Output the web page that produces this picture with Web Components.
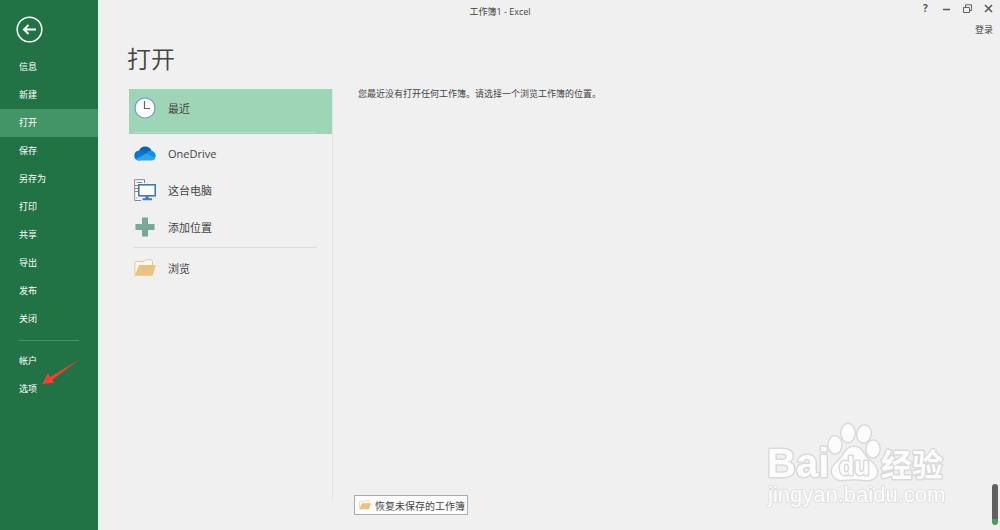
<!DOCTYPE html>
<html lang="zh-CN">
<head>
<meta charset="utf-8">
<title>工作簿1 - Excel</title>
<style>
html, body {
    height: 100%;
    margin: 0;
}
body {
    font-family: "Open Sans", "Noto Sans CJK SC", sans-serif;
    font-size: 9px;
    color: #444;
    background: #f0f0f0;
}
</style>
</head>
<body>
<backstage-view>
    <side-nav slot="nav">
        <nav-item>信息</nav-item>
        <nav-item>新建</nav-item>
        <nav-item selected>打开</nav-item>
        <nav-item>保存</nav-item>
        <nav-item>另存为</nav-item>
        <nav-item>打印</nav-item>
        <nav-item>共享</nav-item>
        <nav-item>导出</nav-item>
        <nav-item>发布</nav-item>
        <nav-item>关闭</nav-item>
        <nav-item slot="bottom">帐户</nav-item>
        <nav-item slot="bottom" pointed>选项</nav-item>
    </side-nav>
    <title-bar slot="title">工作簿1 - Excel</title-bar>
    <span slot="heading">打开</span>
    <place-list slot="places">
        <place-item icon="clock" selected>最近</place-item>
        <place-item icon="cloud">OneDrive</place-item>
        <place-item icon="computer">这台电脑</place-item>
        <place-item icon="plus" divided>添加位置</place-item>
        <place-item icon="folder">浏览</place-item>
    </place-list>
    <recent-pane slot="content">您最近没有打开任何工作簿。请选择一个浏览工作簿的位置。</recent-pane>
</backstage-view>
<baidu-mark></baidu-mark>
<scroll-thumb></scroll-thumb>

<script>
const folderIcon = `
<svg viewBox="0 0 22 18">
    <path d="M1 16.500V3.500Q1 2.500 2 2.500H10L12 .8H17.500L18.500 2.500V6" fill="#fffaf0" stroke="#e8c88e"/>
    <path d="M5 6H21.800L18.500 16.800H.8Z" fill="#eac282"/>
</svg>`;

const icons = {
    clock: `
<svg viewBox="0 0 22 22">
    <circle cx="11" cy="11" r="10" fill="#fff" stroke="#6f9fc9" stroke-width="1.200"/>
    <path d="M10.500 4V11.500H16" fill="none" stroke="#666" stroke-width="1.200"/>
</svg>`,
    cloud: `
<svg viewBox="0 0 22 22">
    <path d="M5 9Q6.500 4.500 11 4.500Q15.500 4.500 17.500 8.500L14 13Z" fill="#0364b8"/>
    <path d="M5 18.500Q.3 18 .3 13.500Q.5 9 5 8.500Q7.500 8 9.500 9.500L15 13L7 18Z" fill="#0078d4"/>
    <path d="M12 11.500Q14 8.300 17 8.500Q21.500 9.500 21.800 14L20.500 16.500L16 14Z" fill="#1490df"/>
    <path d="M1.500 17L12.500 11.500L21.500 16Q20.500 18.600 17.500 18.600H5Q2.800 18.600 1.500 17Z" fill="#28a8ea"/>
</svg>`,
    computer: `
<svg viewBox="0 0 22 22">
    <path d="M4 21.500H.7V.7H10.500V4" fill="#fff" stroke="#888"/>
    <path d="M2.500 3.500H8.500M1 6.500H5M1 9.500H4M1 12.500H4" stroke="#888"/>
    <path d="M2 19H3.500M4 21.500H7" stroke="#888"/>
    <rect x="4.800" y="5.800" width="16.400" height="11" fill="#fff" stroke="#3f7abf" stroke-width="1.600"/>
    <path d="M11.500 17H14.500V19.300H18V21.300H8.500V19.300H11.500Z" fill="#3f7abf"/>
</svg>`,
    plus: `
<svg viewBox="0 0 22 22">
    <path d="M8 1.500H14V8H20.500V14H14V20.500H8V14H1.500V8H8Z" fill="#78a996"/>
</svg>`,
    folder: folderIcon
};

function define(name, html, setup) {
    const tmpl = document.createElement('template');
    tmpl.innerHTML = html;
    customElements.define(name, class extends HTMLElement {
        constructor() {
            super();
            this.attachShadow({mode: 'open'}).appendChild(tmpl.content.cloneNode(true));
        }
        connectedCallback() {
            if (setup) setup(this, this.shadowRoot);
        }
    });
}

// page frame: green menu on the left, title and two panes on the right
define('backstage-view', `
<style>
:host {
    display: flex;
    min-height: 100vh;
}
main {
    flex: 1;
    display: flex;
    flex-direction: column;
}
.account {
    display: flex;
    justify-content: flex-end;
    padding-right: 7px;
    line-height: 16px;
}
a {
    color: #444;
    text-decoration: none;
}
h1 {
    margin: 0 0 9px 29px;
    font-size: 24px;
    font-weight: 350;
    line-height: 42px;
}
.panes {
    flex: 1;
    display: flex;
    padding: 0 31px 15px;
}
::slotted(recent-pane) {
    flex: 1;
}
</style>
<slot name="nav"></slot>
<main>
    <slot name="title"></slot>
    <div class="account"><a href="#">登录</a></div>
    <h1><slot name="heading"></slot></h1>
    <div class="panes">
        <slot name="places"></slot>
        <slot name="content"></slot>
    </div>
</main>`);

define('side-nav', `
<style>
:host {
    display: block;
    width: 98px;
    background: #217346;
    color: #fff;
}
.back {
    display: block;
    margin: 16px 0 10px 16px;
    padding: 0;
    border: 0;
    background: none;
}
.back svg {
    display: block;
    width: 27px;
    height: 27px;
}
hr {
    height: 1px;
    margin: 7px 19px 6px;
    border: 0;
    background: #439467;
}
</style>
<nav>
    <button class="back" aria-label="返回">
        <svg viewBox="0 0 27 27" fill="none" stroke="#fff">
            <circle cx="13.500" cy="13.500" r="12.300" stroke-width="1.600"/>
            <path d="M20 13.500H9M12.500 9L8 13.500L12.500 18" stroke-width="2"/>
        </svg>
    </button>
    <slot></slot>
    <hr>
    <slot name="bottom"></slot>
</nav>`);

define('nav-item', `
<style>
:host {
    display: block;
    position: relative;
}
button {
    display: block;
    width: 100%;
    height: 28px;
    padding: 0 19px 2px;
    border: 0;
    background: none;
    color: inherit;
    font: inherit;
    text-align: left;
}
:host([selected]) button {
    background: #439467;
}
svg {
    display: none;
    position: absolute;
    left: 42px;
    top: -16px;
    width: 38px;
    height: 26px;
}
:host([pointed]) svg {
    display: block;
}
</style>
<button><slot></slot></button>
<svg viewBox="0 0 38 26">
    <path d="M0 25L6 14L8 18L37.500 .5L10.500 20.500L11.800 23.800Z" fill="#ff3b30"/>
</svg>`);

define('title-bar', `
<style>
:host {
    display: grid;
    grid-template-columns: 1fr 98px;
    align-items: center;
    height: 22px;
}
.title {
    text-align: center;
}
.controls {
    display: flex;
    justify-content: flex-end;
    align-self: start;
    padding-right: 1px;
}
button {
    display: flex;
    align-items: center;
    justify-content: center;
    width: 21px;
    height: 16px;
    padding: 0;
    border: 0;
    background: none;
    color: #555;
    font: inherit;
    font-size: 10px;
    font-weight: bold;
}
svg {
    width: 9px;
    height: 9px;
    fill: none;
    stroke: #555;
}
</style>
<div class="title"><slot></slot></div>
<div class="controls">
    <button>?</button>
    <button aria-label="最小化"><svg viewBox="0 0 9 9"><path d="M1 5.500H8" stroke-width="1.500"/></svg></button>
    <button aria-label="还原"><svg viewBox="0 0 9 9"><path d="M.5 3.500H6.500V8.500H.5ZM2.500 3V.8H8.500V6.500H7" stroke-width=".9"/></svg></button>
    <button aria-label="关闭"><svg viewBox="0 0 9 9"><path d="M1 1L8 8M8 1L1 8" stroke-width="1.500"/></svg></button>
</div>`);

define('place-list', `
<style>
:host {
    display: block;
    width: 203px;
    margin-bottom: 14px;
    border-right: 1px solid #e4e4e4;
}
</style>
<slot></slot>`);

define('place-item', `
<style>
:host {
    display: block;
}
button {
    display: flex;
    align-items: center;
    gap: 12px;
    width: 100%;
    height: 37px;
    padding: 0 5px 3px;
    border: 0;
    background: none;
    color: inherit;
    font: inherit;
    font-size: 11px;
    text-align: left;
}
.icon svg {
    display: block;
    width: 22px;
}
hr {
    display: none;
    height: 1px;
    margin: 0 15px 3px 4px;
    border: 0;
    background: #dcdcdc;
}
:host([divided]) hr {
    display: block;
}
:host([selected]) {
    margin-bottom: 2px;
    padding-bottom: 1px;
    background: #9fd5b7;
}
:host([selected]) button {
    height: 43px;
    padding-bottom: 6px;
}
:host([selected]) hr {
    display: block;
    margin-bottom: 0;
    background: #b9dcc9;
}
</style>
<button><span class="icon"></span><slot></slot></button>
<hr>`, (host, root) => {
    root.querySelector('.icon').innerHTML = icons[host.getAttribute('icon')];
});

define('recent-pane', `
<style>
:host {
    display: flex;
    flex-direction: column;
    justify-content: space-between;
    align-items: flex-start;
    padding-left: 21px;
}
p {
    margin: 0;
    padding-left: 4px;
    line-height: 10px;
}
button {
    display: flex;
    align-items: center;
    gap: 4px;
    height: 20px;
    padding: 0 2px 0 4px;
    border: 1px solid #ababab;
    background: #fdfdfd;
    color: inherit;
    font: inherit;
    font-size: 10px;
}
svg {
    width: 12px;
    height: 10px;
}
</style>
<p><slot></slot></p>
<button>${folderIcon}恢复未保存的工作簿</button>`);

// floats over the bottom right corner
define('baidu-mark', `
<style>
:host {
    position: fixed;
    right: 52px;
    bottom: 20px;
    pointer-events: none;
}
svg {
    display: block;
    width: 182px;
    height: 90px;
    overflow: visible;
    fill: #fcfcfc;
    stroke: #dadada;
    stroke-width: 3;
    stroke-linejoin: round;
    paint-order: stroke;
    font-family: "Liberation Sans", "Noto Sans CJK SC", sans-serif;
    font-weight: bold;
}
.url {
    stroke: #e0e0e0;
    stroke-width: 2;
    font-weight: normal;
}
</style>
<svg viewBox="0 0 182 90">
    <ellipse cx="69" cy="25" rx="6.300" ry="8.500"/>
    <ellipse cx="82" cy="13" rx="6.500" ry="9"/>
    <ellipse cx="98" cy="14" rx="6.500" ry="8.500" transform="rotate(12 98 14)"/>
    <ellipse cx="107" cy="29" rx="6.500" ry="8.300"/>
    <path d="M88 27C94 27 97 32 100 37C104 42 111 45 111 52C111 58 106 60 101 60C96 60 93 59 88 59C83 59 80 60 76 60C70 60 66 56 66 51C66 45 72 42 76 37C79 32 82 27 88 27Z"/>
    <text x="1" y="57" font-size="40">Bai</text>
    <text x="73" y="55" font-size="25">du</text>
    <text x="115" y="56" font-size="31">经验</text>
    <text x="2" y="82" font-size="22" class="url">jingyan.baidu.com</text>
</svg>`);

define('scroll-thumb', `
<style>
:host {
    position: fixed;
    right: 2px;
    bottom: 5px;
    width: 6px;
    height: 41px;
    border-radius: 3px;
    background: linear-gradient(#606060 35px, #46a05c 35px);
}
</style>`);
</script>
</body>
</html>
